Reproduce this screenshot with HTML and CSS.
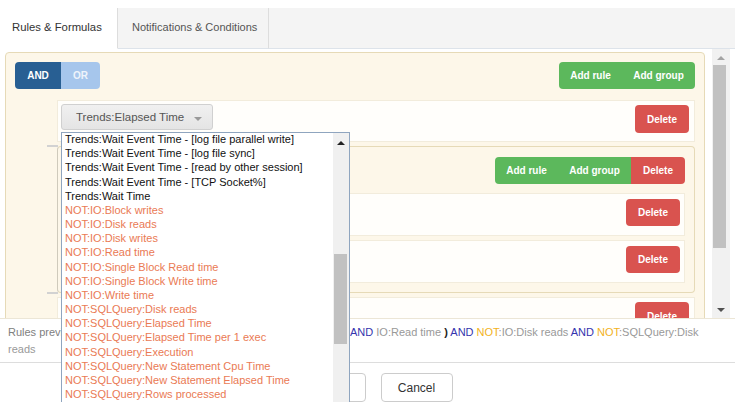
FILE: index.html
```html
<!DOCTYPE html>
<html>
<head>
<meta charset="UTF-8">
<title>Rules builder</title>
<link rel="stylesheet" href="styles.css">
</head>
<body>
<div class="tabs">
  <div class="tab active">Rules &amp; Formulas</div>
  <div class="tab">Notifications &amp; Conditions</div>
  <div class="tab-fill"></div>
</div>

<div class="workspace">
  <div class="canvas">
    <div class="group root">
      <div class="group-head">
        <div class="btn-group">
          <button class="btn btn-and">AND</button>
          <button class="btn btn-or">OR</button>
        </div>
        <div class="btn-group">
          <button class="btn btn-green w-rule">Add rule</button>
          <button class="btn btn-green w-group">Add group</button>
        </div>
      </div>
      <div class="rules">
        <div class="rule first">
          <div class="select">Trends:Elapsed Time <span class="caret"></span></div>
          <button class="btn btn-red w-del">Delete</button>
        </div>
        <div class="group nested">
          <div class="group-head">
            <div></div>
            <div class="btn-group">
              <button class="btn btn-green w-rule">Add rule</button>
              <button class="btn btn-green w-group">Add group</button>
              <button class="btn btn-red w-del">Delete</button>
            </div>
          </div>
          <div class="rules">
            <div class="rule">
              <div class="select">IO:Block writes <span class="caret"></span></div>
              <button class="btn btn-red w-del">Delete</button>
            </div>
            <div class="rule">
              <div class="select">IO:Read time <span class="caret"></span></div>
              <button class="btn btn-red w-del">Delete</button>
            </div>
          </div>
        </div>
        <div class="rule">
          <div class="select">IO:Disk reads <span class="caret"></span></div>
          <button class="btn btn-red w-del">Delete</button>
        </div>
      </div>
    </div>
  </div>
  <div class="vscroll">
    <span class="arrow up"></span>
    <span class="thumb"></span>
    <span class="arrow down"></span>
  </div>
</div>

<div class="preview">
  <span class="label">Rules preview: </span><b>(</b><span class="term">Trends:Elapsed Time</span> <span class="op">AND</span> <span class="term">IO:Single Block Read time</span> <span class="op">AND</span> <span class="term">IO:Read time</span> <b>)</b> <span class="op">AND</span> <span class="not">NOT</span><span class="term">:IO:Disk reads</span> <span class="op">AND</span> <span class="not">NOT</span><span class="term">:SQLQuery:Disk reads</span>
</div>

<div class="footer">
  <button class="btn-default">Save</button>
  <button class="btn-default">Cancel</button>
</div>

<div class="dropdown">
  <div class="options">
    <div class="opt">Trends:Wait Event Time - [log file parallel write]</div>
    <div class="opt">Trends:Wait Event Time - [log file sync]</div>
    <div class="opt">Trends:Wait Event Time - [read by other session]</div>
    <div class="opt">Trends:Wait Event Time - [TCP Socket%]</div>
    <div class="opt">Trends:Wait Time</div>
    <div class="opt neg">NOT:IO:Block writes</div>
    <div class="opt neg">NOT:IO:Disk reads</div>
    <div class="opt neg">NOT:IO:Disk writes</div>
    <div class="opt neg">NOT:IO:Read time</div>
    <div class="opt neg">NOT:IO:Single Block Read time</div>
    <div class="opt neg">NOT:IO:Single Block Write time</div>
    <div class="opt neg">NOT:IO:Write time</div>
    <div class="opt neg">NOT:SQLQuery:Disk reads</div>
    <div class="opt neg">NOT:SQLQuery:Elapsed Time</div>
    <div class="opt neg">NOT:SQLQuery:Elapsed Time per 1 exec</div>
    <div class="opt neg">NOT:SQLQuery:Execution</div>
    <div class="opt neg">NOT:SQLQuery:New Statement Cpu Time</div>
    <div class="opt neg">NOT:SQLQuery:New Statement Elapsed Time</div>
    <div class="opt neg">NOT:SQLQuery:Rows processed</div>
    <div class="opt neg">NOT:SQLQuery:Sorts</div>
  </div>
  <div class="list-scroll">
    <span class="arrow up dark"></span>
    <span class="thumb"></span>
  </div>
</div>
</body>
</html>
```

FILE: styles.css
```css
* { box-sizing: border-box; }
html, body { margin: 0; height: 100%; overflow: hidden; }
body { position: relative; font-family: "Liberation Sans", Arial, sans-serif; font-size: 11px; color: #333; background: #fff; }

/* tabs */
.tabs { display: flex; margin-top: 8px; height: 41px; background: #f4f4f4; }
.tab { height: 41px; line-height: 38px; border-right: 1px solid #ddd; border-bottom: 1px solid #dde3ea; color: #555; }
.tab.active { width: 118px; padding-left: 12px; background: #fff; border-bottom-color: #fff; color: #333; font-size: 11.3px; }
.tab + .tab { width: 151px; padding-left: 14px; }
.tab-fill { flex: 1; border-bottom: 1px solid #dde3ea; }

/* rule canvas with its scrollbar */
.workspace { display: flex; height: 269px; padding-right: 5px; }
.canvas { flex: 1; overflow: hidden; padding: 3px 7px 0 5px; }
.vscroll { width: 18px; background: #f1f1f1; display: flex; flex-direction: column; align-items: flex-start; padding: 7px 0 6px 1px; }
.vscroll .thumb { width: 13px; height: 183px; margin-top: 5px; background: #c1c1c1; }
.vscroll .down { margin-top: auto; }
.arrow { display: block; width: 0; height: 0; margin-left: 4px; border-left: 4px solid transparent; border-right: 4px solid transparent; }
.arrow.up { border-bottom: 4px solid #a3a3a3; }
.arrow.down { border-top: 4px solid #505050; }
.arrow.dark { border-bottom-color: #222; }

.group { border: 1px solid #e6dab7; border-radius: 4px; background: #fdf7e9; }
.root { padding: 9px 9px 9px 9px; }
.group-head { display: flex; justify-content: space-between; }
.rules { padding-left: 42px; }
.root > .rules { margin-top: 11px; }

.rule { display: flex; justify-content: space-between; align-items: flex-start; background: #fffefb; border: 1px solid #f2ecdc; padding: 3px 5px 8px 3px; }
.rule + .group, .group + .rule { margin-top: 4px; }

.nested { position: relative; padding: 10px 9px 9px 10px; border-left-color: #cfcabb; }
.nested::before, .nested::after { content: ""; position: absolute; left: -11px; width: 11px; height: 2px; background: #d2d2d2; }
.nested::before { top: -2px; }
.nested::after { bottom: -2px; }
.nested .rules { margin-top: 9px; padding-left: 30px; }
.nested .rule { padding: 5px 4px 9px 4px; }
.nested .rule + .rule { margin-top: 4px; }

.select { position: relative; width: 152px; height: 26px; line-height: 24px; padding-left: 14px; font-size: 11.5px; color: #555; background: linear-gradient(#f0f0f0, #e4e4e4); border: 1px solid #d0d0d0; border-radius: 3px; }
.caret { position: absolute; right: 10px; top: 12px; border-left: 4px solid transparent; border-right: 4px solid transparent; border-top: 4px solid #999; }

/* buttons */
.btn-group { display: flex; }
.btn { height: 27px; padding: 0; border: 0; border-radius: 0; font: bold 10px "Liberation Sans", Arial, sans-serif; color: #fff; }
.btn-group .btn:first-child { border-radius: 4px 0 0 4px; }
.btn-group .btn:last-child { border-radius: 0 4px 4px 0; }
.btn-and { width: 46px; background: #285f93; }
.btn-or { width: 39px; background: #a6c6ec; color: #eef4fb; }
.btn-green { background: #5cb85c; }
.btn-red { background: #d9534f; border-radius: 4px; }
.w-rule { width: 63px; }
.w-group { width: 73px; }
.w-del { width: 54px; }
.rule .btn-red { height: 28px; margin-top: 1px; }
.nested .rule .btn-red { height: 27px; margin-top: 0; }

/* preview and footer */
.preview { height: 45px; padding: 5px 30px 5px 8px; line-height: 17px; border-top: 1px solid #ece6d6; border-bottom: 1px solid #ddd; color: #999; }
.preview .label { color: #808080; }
.preview b { color: #222; }
.preview .op { color: #3434ae; }
.preview .not { color: #f2b21c; }

.footer { display: flex; justify-content: center; gap: 15px; padding: 10px 0 0 11px; }
.btn-default { width: 72px; height: 29px; background: #fff; border: 1px solid #ccc; border-radius: 4px; font: 12px "Liberation Sans", Arial, sans-serif; color: #333; }

/* open select list */
.dropdown { position: absolute; left: 61px; top: 132px; width: 289px; height: 290px; display: flex; background: #fff; border: 1px solid #8fa5bf; }
.options { flex: 1; overflow: hidden; }
.opt { padding-left: 3px; line-height: 14.17px; font-size: 11px; color: #111; white-space: nowrap; }
.opt:first-child { margin-top: -1px; }
.opt.neg { color: #ea7a54; }
.list-scroll { width: 16px; background: #f0f0f0; display: flex; flex-direction: column; padding-top: 8px; }
.list-scroll .arrow { margin-left: 4px; }
.list-scroll .thumb { width: 13px; height: 90px; margin: 109px 0 0 1px; background: #c1c1c1; }
```
